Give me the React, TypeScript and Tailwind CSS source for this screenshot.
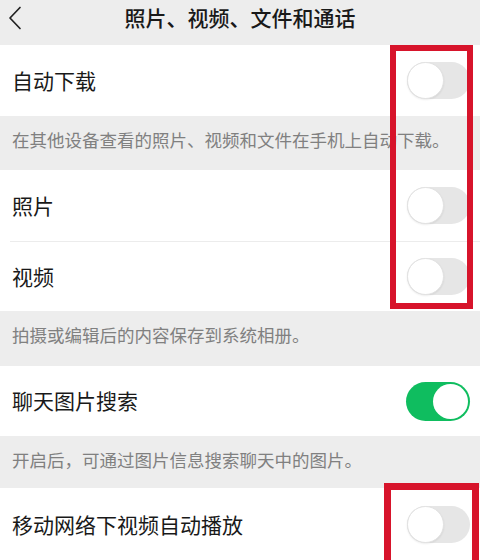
import React from "react";

function Toggle({ on }: { on?: boolean }) {
  if (on) {
    return (
      <div className="relative w-[64px] h-[39px] rounded-full bg-[#0fbd5f] shrink-0">
        <div className="absolute right-[2px] top-[2px] w-[35px] h-[35px] rounded-full bg-white" />
      </div>
    );
  }
  return (
    <div className="relative w-[63px] h-[37px] rounded-full bg-[#e6e6e6] shrink-0">
      <div className="absolute left-0 top-0 w-[37px] h-[37px] rounded-full bg-white border border-[#e2e2e2] shadow-[0_1px_2px_rgba(0,0,0,0.08)]" />
    </div>
  );
}

function Row({ label, on, h = "h-[71px]" }: { label: string; on?: boolean; h?: string }) {
  return (
    <div className={`flex items-center justify-between bg-white pl-[12px] pr-[10px] ${h}`}>
      <span className="text-[21px] text-[#191919]">{label}</span>
      <Toggle on={on} />
    </div>
  );
}

function Desc({ text, h }: { text: string; h: string }) {
  return (
    <div className={`bg-[#ededed] pl-[12px] pt-[12px] ${h}`}>
      <span className="text-[17.5px] leading-[24px] text-[#808080]">{text}</span>
    </div>
  );
}

export default function App() {
  return (
    <div
      className="relative w-[480px] h-[560px] overflow-hidden bg-[#ededed]"
      style={{ fontFamily: '"Noto Sans CJK SC", "Noto Sans", sans-serif' }}
    >
      <div className="relative h-[45px] flex items-center justify-center bg-[#ededed]">
        <svg className="absolute left-[7px] top-[6px]" width="16" height="24" viewBox="0 0 16 24" fill="none">
          <path d="M13 1.5 L3 12 L13 22.5" stroke="#222" strokeWidth="1.7" strokeLinecap="round" strokeLinejoin="round" />
        </svg>
        <span className="text-[21px] font-medium text-[#191919] -mt-[9px]">照片、视频、文件和通话</span>
      </div>
      <Row label="自动下载" />
      <Desc text="在其他设备查看的照片、视频和文件在手机上自动下载。" h="h-[54px]" />
      <Row label="照片" />
      <div className="bg-white pl-[10px]">
        <div className="h-px bg-[#ececec]" />
      </div>
      <Row label="视频" h="h-[69px]" />
      <Desc text="拍摄或编辑后的内容保存到系统相册。" h="h-[55px]" />
      <Row label="聊天图片搜索" on h="h-[70px]" />
      <Desc text="开启后，可通过图片信息搜索聊天中的图片。" h="h-[52px]" />
      <Row label="移动网络下视频自动播放" h="h-[73px]" />

      <div className="absolute left-[390px] top-[45px] w-[83px] h-[264px] border-[6px] border-[#d7142b]" />
      <div className="absolute left-[384px] top-[483px] w-[95px] h-[90px] border-[7px] border-[#d7142b]" />
    </div>
  );
}
